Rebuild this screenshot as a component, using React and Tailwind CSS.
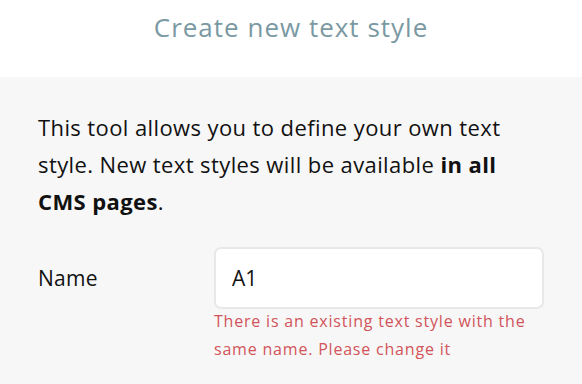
import React, { useState } from "react";

const App = () => {
  const [name, setName] = useState("A1");

  return (
    <div className="w-[582px] h-[384px] overflow-hidden bg-[#f7f7f7] font-['Open_Sans',sans-serif]">
      <div className="h-[77px] bg-white flex justify-center pt-[9px]">
        <h1 className="text-[26px] leading-[36px] tracking-[1px] text-[#7a99a2] font-normal">Create new text style</h1>
      </div>
      <div className="px-[38px] pt-[32px]">
        <p className="w-[485px] text-[22px] leading-[37px] tracking-[0.4px] text-[#111]">
          This tool allows you to define your own text style. New text styles will be available{" "}
          <b className="font-bold">in all CMS pages</b>.
        </p>
        <div className="flex mt-[27px]">
          <label className="w-[177px] text-[21px] leading-[62px] tracking-[0.3px] text-[#111]">Name</label>
          <div className="flex flex-col">
            <input
              className="w-[330px] h-[62px] px-[16px] bg-white border-2 border-[#e8e8e8] rounded-[7px] text-[21px] text-[#111] outline-none"
              value={name}
              onChange={(e) => setName(e.target.value)}
            />
            <p className="w-[330px] -mt-[2px] text-[16px] leading-[28px] tracking-[0.8px] text-[#d2545a]">
              There is an existing text style with the same name. Please change it
            </p>
          </div>
        </div>
      </div>
    </div>
  );
};

export default App;
